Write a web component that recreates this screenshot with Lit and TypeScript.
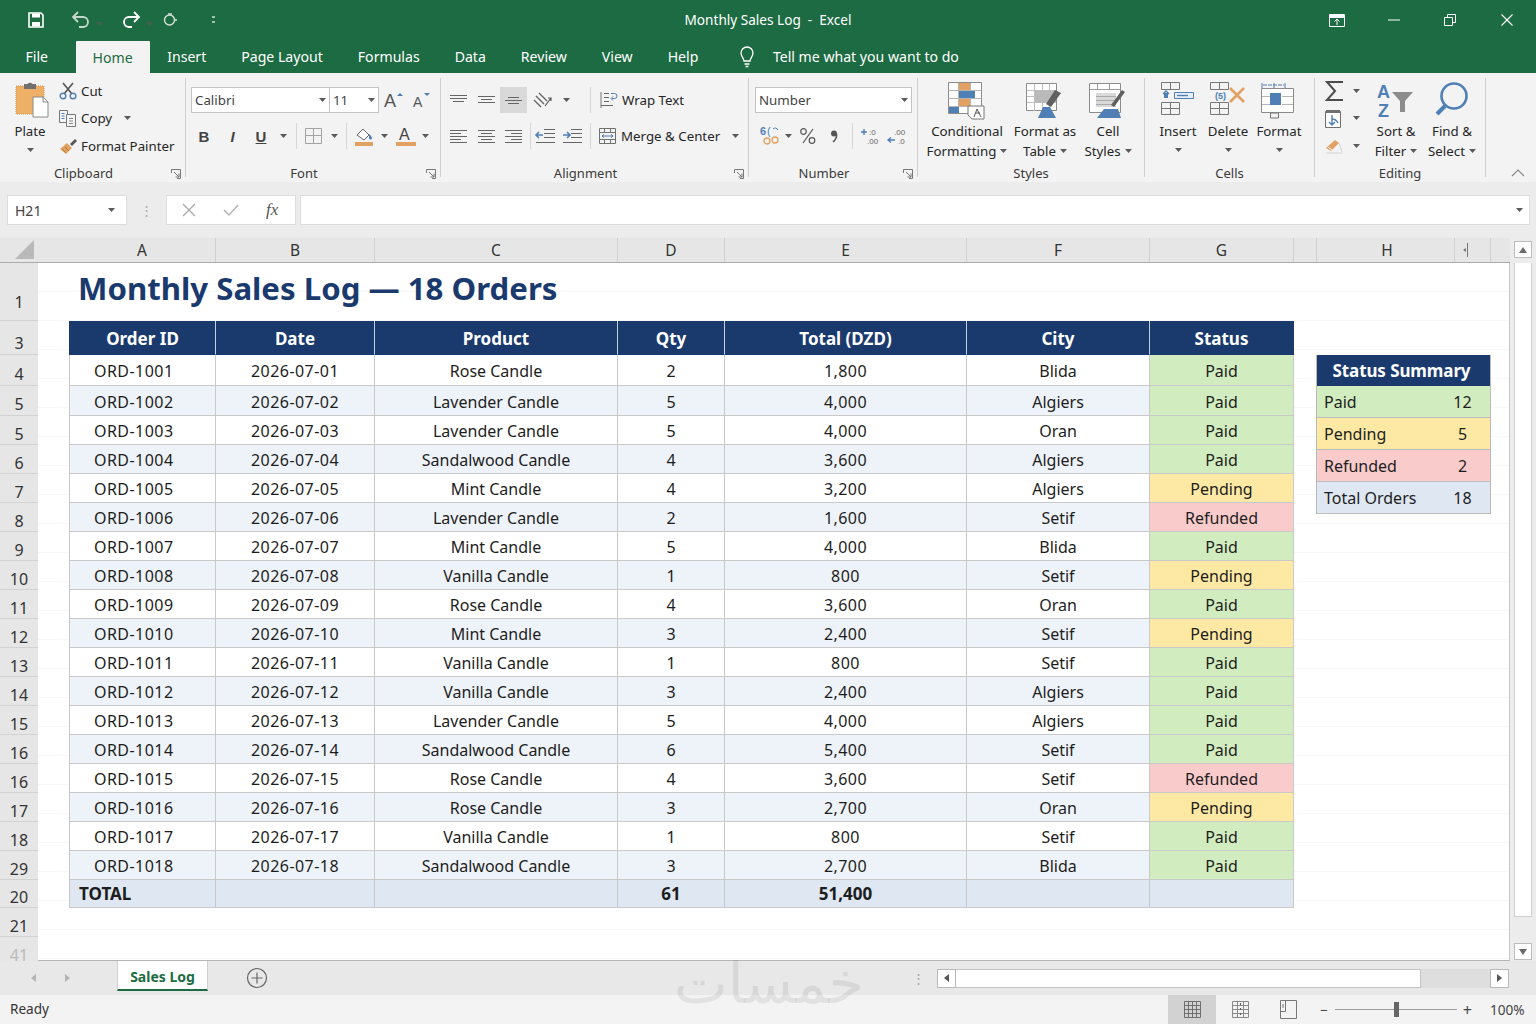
import { LitElement, html, css, svg } from "lit";
import { customElement } from "lit/decorators.js";

const ORDERS = [
  ["ORD-1001", "2026-07-01", "Rose Candle", "2", "1,800", "Blida", "Paid"],
  ["ORD-1002", "2026-07-02", "Lavender Candle", "5", "4,000", "Algiers", "Paid"],
  ["ORD-1003", "2026-07-03", "Lavender Candle", "5", "4,000", "Oran", "Paid"],
  ["ORD-1004", "2026-07-04", "Sandalwood Candle", "4", "3,600", "Algiers", "Paid"],
  ["ORD-1005", "2026-07-05", "Mint Candle", "4", "3,200", "Algiers", "Pending"],
  ["ORD-1006", "2026-07-06", "Lavender Candle", "2", "1,600", "Setif", "Refunded"],
  ["ORD-1007", "2026-07-07", "Mint Candle", "5", "4,000", "Blida", "Paid"],
  ["ORD-1008", "2026-07-08", "Vanilla Candle", "1", "800", "Setif", "Pending"],
  ["ORD-1009", "2026-07-09", "Rose Candle", "4", "3,600", "Oran", "Paid"],
  ["ORD-1010", "2026-07-10", "Mint Candle", "3", "2,400", "Setif", "Pending"],
  ["ORD-1011", "2026-07-11", "Vanilla Candle", "1", "800", "Setif", "Paid"],
  ["ORD-1012", "2026-07-12", "Vanilla Candle", "3", "2,400", "Algiers", "Paid"],
  ["ORD-1013", "2026-07-13", "Lavender Candle", "5", "4,000", "Algiers", "Paid"],
  ["ORD-1014", "2026-07-14", "Sandalwood Candle", "6", "5,400", "Setif", "Paid"],
  ["ORD-1015", "2026-07-15", "Rose Candle", "4", "3,600", "Setif", "Refunded"],
  ["ORD-1016", "2026-07-16", "Rose Candle", "3", "2,700", "Oran", "Pending"],
  ["ORD-1017", "2026-07-17", "Vanilla Candle", "1", "800", "Setif", "Paid"],
  ["ORD-1018", "2026-07-18", "Sandalwood Candle", "3", "2,700", "Blida", "Paid"],
];
const HEADERS = ["Order ID", "Date", "Product", "Qty", "Total (DZD)", "City", "Status"];
const ROW_LABELS = ["3", "4", "5", "5", "6", "7", "8", "9", "10", "11", "12", "13", "14", "15", "16", "16", "17", "18", "29", "20", "21"];
const SUMMARY = [
  ["Paid", "12", "paid"],
  ["Pending", "5", "pending"],
  ["Refunded", "2", "refunded"],
  ["Total Orders", "18", "sum-total"],
];
const TABS = ["Insert", "Page Layout", "Formulas", "Data", "Review", "View", "Help"];

const BL = "#4f7fb5";
const OR = "#e3a063";

const ic = (w: number, h: number, body: unknown) =>
  html`<svg width=${w} height=${h} viewBox="0 0 ${w} ${h}" fill="none">${body}</svg>`;

const caret = () => html`<svg class="caret" width="7" height="4" viewBox="0 0 7 4"><path d="M0 0h7L3.5 4z" fill="#5a5a5a"/></svg>`;
const launcher = () => html`<svg class="launcher" width="10" height="10" viewBox="0 0 10 10" fill="none" stroke="#777">
  <path d="M.5 4V.5H9.5V9.5H6"/><path d="M3 3l5 5M8 4.5V8H4.5"/></svg>`;

const lines = (rows: number[][], color = "#666") =>
  rows.map(([x1, x2, y]) => svg`<path d="M${x1} ${y}.5H${x2}" stroke=${color}/>`);

// ribbon icons, drawn at the size they have on screen
const icons = {
  save: ic(18, 18, svg`<path d="M2 2h12l2 2v12H2z" stroke="#fff" stroke-width="1.6"/><path d="M5 2.5h8v4H5z" fill="#fff"/><path d="M5 11h8v4.5H5z" fill="#fff"/>`),
  undo: ic(20, 18, svg`<path d="M2 6h10a5 5 0 0 1 0 10H8" stroke="#c6d8cd" stroke-width="1.8"/><path d="M7 1L2 6l5 5" stroke="#c6d8cd" stroke-width="1.8"/>`),
  redo: ic(20, 18, svg`<path d="M18 6H8a5 5 0 0 0 0 10h3" stroke="#fff" stroke-width="1.8"/><path d="M13 1l5 5-5 5" stroke="#fff" stroke-width="1.8"/>`),
  touch: ic(16, 16, svg`<circle cx="7.5" cy="8" r="5" stroke="#d5e2da" stroke-width="1.4"/><path d="M6 2h4M12 8h3" stroke="#d5e2da" stroke-width="1.4"/>`),
  qat: ic(4, 8, svg`<path d="M0 1h3M0 6h3" stroke="#cfe0d6" stroke-width="1.4"/>`),
  bulb: ic(16, 22, svg`<path d="M5 15c0-3-3-4-3-8a6 6 0 0 1 12 0c0 4-3 5-3 8z" stroke="#fff" stroke-width="1.3"/><path d="M5.5 18h5M6.5 20.5h3" stroke="#fff" stroke-width="1.3"/>`),
  display: ic(16, 13, svg`<path d="M.5.5h15v12H.5z" stroke="#fff"/><path d="M1 1h14v3H1z" fill="#fff"/><path d="M8 11V6M5.5 7.5L8 5l2.5 2.5" stroke="#fff"/>`),
  min: ic(12, 2, svg`<path d="M0 1h12" stroke="#fff"/>`),
  restore: ic(12, 12, svg`<path d="M.5 3.5h8v8h-8z" stroke="#fff"/><path d="M3.5 3V.5h8v8H9" stroke="#fff"/>`),
  close: ic(12, 12, svg`<path d="M.5.5l11 11M11.5.5l-11 11" stroke="#fff" stroke-width="1.1"/>`),
  paste: ic(40, 36, svg`<path d="M6 4h28v28H6z" fill="#eeaf66"/><path d="M6 4h28v28H6z" stroke="#d9954a" stroke-dasharray="1 1"/><path d="M14 2h3.5a3 3 0 0 1 5 0H26v5H14z" fill="#707070"/><path d="M23 15h10l5 5v15H23z" fill="#fff" stroke="#8a8a8a"/><path d="M33 15v5h5" stroke="#8a8a8a"/>`),
  cut: ic(18, 18, svg`<path d="M4 1l9 11M14 1L5 12" stroke="#555" stroke-width="1.6"/><circle cx="4" cy="14" r="2.8" stroke=${BL} stroke-width="1.4"/><circle cx="14" cy="14" r="2.8" stroke=${BL} stroke-width="1.4"/>`),
  copy: ic(18, 18, svg`<path d="M.5 1.5h8v12h-8z" stroke="#777"/><path d="M7.5 5.5h9v12h-9z" fill="#f5f5f5" stroke="#777"/><path d="M2.5 4.5h3M2.5 7h3M2.5 9.5h3" stroke=${BL}/><path d="M10 9.5h4M10 12h4M10 14.5h4" stroke="#888"/>`),
  painter: ic(20, 18, svg`<path d="M1 12l7-6 5 5-6 6z" fill=${OR}/><path d="M3 12l4 4M6 10l4 4" stroke="#b37a3f"/><path d="M11 7l5-5 2 2-5 5z" fill="#555"/>`),
  growA: ic(20, 18, svg`<text x="0" y="16" font-size="18" fill="#555" font-family="Liberation Sans">A</text><path d="M13 5l3-3 3 3z" fill=${BL}/>`),
  shrinkA: ic(20, 18, svg`<text x="1" y="16" font-size="14" fill="#555" font-family="Liberation Sans">A</text><path d="M12 2h6l-3 3z" fill=${BL}/>`),
  borders: ic(18, 16, svg`<path d="M.5.5h16v15H.5zM8.5 1v14M1 7.5h15" stroke="#a3a3a3"/>`),
  fill: ic(20, 20, svg`<path d="M3 9l6-6 6 6-5 5z" fill="#fff" stroke="#666"/><path d="M15 8c2 2 3 3 3 4a1.5 1.5 0 0 1-3 0z" fill=${BL}/><path d="M1 16h18v4H1z" fill=${OR}/>`),
  fontColor: ic(20, 20, svg`<text x="3" y="14" font-size="16" fill="#444" font-family="Liberation Sans">A</text><path d="M0 16h20v4H0z" fill=${OR}/>`),
  aTop: ic(18, 10, svg`${lines([[0, 17, 0], [0, 17, 3], [3, 14, 6]])}`),
  aMid: ic(18, 10, svg`${lines([[0, 17, 1], [3, 14, 4], [0, 17, 7]])}`),
  aBot: ic(18, 10, svg`${lines([[3, 14, 2], [0, 17, 5], [3, 14, 8]])}`),
  aLeft: ic(18, 14, svg`${lines([[0, 17, 1], [0, 11, 4], [0, 17, 7], [0, 11, 10], [0, 17, 13]])}`),
  aCenter: ic(18, 14, svg`${lines([[0, 17, 1], [3, 14, 4], [0, 17, 7], [3, 14, 10], [0, 17, 13]])}`),
  aRight: ic(18, 14, svg`${lines([[0, 17, 1], [6, 17, 4], [0, 17, 7], [6, 17, 10], [0, 17, 13]])}`),
  orient: ic(20, 18, svg`<path d="M3 5l8 8M1 9l7 7M6 2l8 8" stroke="#666" stroke-width="1.4"/><path d="M12 15L18 7M15 7h3v3" stroke="#555" stroke-width="1.2"/>`),
  indentL: ic(20, 14, svg`${lines([[8, 19, 0], [8, 19, 4], [8, 19, 8], [0, 19, 13]])}<path d="M0 6h7M3 3L0 6l3 3" stroke=${BL} stroke-width="1.6"/>`),
  indentR: ic(20, 14, svg`${lines([[8, 19, 0], [8, 19, 4], [8, 19, 8], [0, 19, 13]])}<path d="M0 6h7M4 3l3 3-3 3" stroke=${BL} stroke-width="1.6"/>`),
  wrap: ic(18, 18, svg`<path d="M1 1v16" stroke="#777"/><path d="M4 2.5h5M4 6.5h5M4 10.5h5M1 14.5h12" stroke="#666"/><path d="M11 2.5h3.5a2 2 0 0 1 0 5H12M13 5.5l-2 2 2 2" stroke=${BL}/>`),
  merge: ic(18, 18, svg`<path d="M.5 1.5h16v15H.5zM1 5.5h15M1 12.5h15M5.5 1v4M11.5 1v4M5.5 13v3M11.5 13v3" stroke="#707070"/><path d="M3 9h11M5 7.5L3 9l2 1.5M12 7.5L14 9l-2 1.5" stroke=${BL}/>`),
  accounting: ic(20, 20, svg`<text x="0" y="9" font-size="11" fill=${BL} font-family="Liberation Sans" font-weight="700">6</text><text x="7" y="9" font-size="11" fill=${BL} font-family="Liberation Sans">(</text><path d="M13 3a3 3 0 0 1 5 1" stroke=${BL}/><circle cx="7" cy="15" r="3" stroke=${OR} stroke-width="1.3"/><circle cx="15" cy="14" r="3" stroke=${OR} stroke-width="1.3"/>`),
  percent: ic(18, 18, svg`<circle cx="4.5" cy="4.5" r="2.8" stroke="#555" stroke-width="1.2"/><circle cx="13" cy="13.5" r="2.8" stroke="#555" stroke-width="1.2"/><path d="M14 2L4 16" stroke="#555" stroke-width="1.2"/>`),
  comma: ic(10, 14, svg`<circle cx="5" cy="4.5" r="3" fill="#555"/><path d="M7.5 5c.5 3-1 6-3.5 8" stroke="#555" stroke-width="1.6"/>`),
  incDec: ic(20, 16, svg`<path d="M1 4h6M4 1v6" stroke=${BL} stroke-width="1.4"/><text x="9" y="7" font-size="8" fill="#666" font-family="Liberation Sans">:0</text><text x="7" y="15.5" font-size="8" fill="#666" font-family="Liberation Sans">.00</text>`),
  decDec: ic(20, 16, svg`<text x="7" y="7" font-size="8" fill="#666" font-family="Liberation Sans">.00</text><path d="M1 12h7M5 9.5L8 12l-3 2.5" stroke=${BL} stroke-width="1.3" transform="matrix(-1 0 0 1 9 0)"/><text x="11" y="15.5" font-size="8" fill="#666" font-family="Liberation Sans">.0</text>`),
  conditional: ic(38, 38, svg`<path d="M.5.5h33v31H.5z" fill="#fff" stroke="#8b8b8b"/><path d="M.5 8.5h33M.5 16.5h33M.5 24.5h33M10.5 1v30M22.5 1v30" stroke="#b5b5b5"/><path d="M11 1h11v7H11zM11 17h11v7H11z" fill=${OR}/><path d="M11 9h16v7H11zM1 25h10v6H1z" fill=${BL}/><path d="M20 24h16v13H24l-4-4z" fill="#fff" stroke="#777"/><path d="M26 35l3-8 4 8M28 31h4" stroke="#555"/>`),
  asTable: ic(38, 38, svg`<path d="M.5 1.5h30v27H.5z" fill="#fff" stroke="#8b8b8b"/><path d="M1 8.5h29M1 14.5h29M1 20.5h29M8.5 2v27M16.5 2v27M23.5 2v27" stroke="#bdbdbd"/><path d="M9 9h21v12H9z" fill="#b9b9b9"/><path d="M29 8l6 3-10 14-5-3z" fill="#606060"/><path d="M12 36l5-11h7l6 11z" fill=${BL}/>`),
  cellStyles: ic(38, 38, svg`<path d="M.5 1.5h31v29H.5z" fill="#fff" stroke="#8b8b8b"/><path d="M1 7.5h30M8.5 2v6M20.5 2v6" stroke="#9c9c9c"/><path d="M7 11h20v14H7z" fill="#d9d9d9"/><path d="M7 14.5h20M7 18.5h20M7 22.5h20" stroke="#a9a9a9"/><path d="M33 8l3 2-11 15-3-2z" fill="#606060"/><path d="M8 36l7-9h14l3 9z" fill=${BL}/>`),
  insert: ic(34, 34, svg`<path d="M.5.5h18v7H.5zM9.5 1v6M.5 20.5h18v12H.5zM1 26.5h17M9.5 21v12" stroke="#777"/><path d="M3 11h4v5H3z" fill=${BL}/><path d="M2 12l3-3 3 3" stroke=${BL} stroke-width="1.4"/><path d="M13.5 10.5h19v6h-19z" fill="#e9eef5" stroke=${BL}/><path d="M16 13.5h11" stroke=${BL} stroke-width="1.4"/>`),
  del: ic(36, 34, svg`<path d="M.5.5h18v7H.5zM9.5 1v6M.5 20.5h18v12H.5zM1 26.5h17M9.5 21v12" stroke="#777"/><text x="5" y="17" font-size="9" fill=${BL} font-family="Liberation Sans" font-weight="700">(5)</text><path d="M20 6l14 14M34 6L20 20" stroke=${OR} stroke-width="2.6"/>`),
  format: ic(36, 38, svg`<path d="M.5 6.5h32v24H.5z" fill="#fff" stroke="#8b8b8b"/><path d="M1 1v5M13 1v5M24 1v5" stroke=${BL}/><path d="M2 3h21" stroke=${BL} stroke-dasharray="4 1"/><path d="M9 11h11v12H9z" fill=${BL}/><path d="M1 14.5h8M21 14.5h11M1 22.5h8M21 22.5h11" stroke="#b5b5b5"/><path d="M9.5 31h8v5h-8z" stroke="#777"/>`),
  sum: ic(20, 20, svg`<path d="M18 1H2l8 9-8 9h16" stroke="#4c4c4c" stroke-width="2"/>`),
  fillDown: ic(18, 19, svg`<path d="M.5 2.5h15v16H.5z" fill="#fff" stroke="#707070"/><path d="M1 1h14v3H1z" fill="#707070"/><path d="M7 6v9M4 13l3 3 3-3M7 10c3 0 5 2 6 4" stroke=${BL} stroke-width="1.4"/>`),
  clear: ic(18, 16, svg`<path d="M1 10l9-8 4 3-8 8z" fill=${OR}/><path d="M3 9l4 3" stroke="#fff"/><path d="M1 15h16M14 5l3 9" stroke="#d3d3d3"/>`),
  sort: ic(38, 36, svg`<text x="0" y="16" font-size="18" font-weight="700" fill=${BL} font-family="Liberation Sans">A</text><text x="1" y="35" font-size="18" font-weight="700" fill=${BL} font-family="Liberation Sans">Z</text><path d="M15 10h21l-8 9v11h-5V19z" fill="#8c8c8c"/>`),
  find: ic(36, 36, svg`<circle cx="20" cy="14" r="12.5" stroke=${BL} stroke-width="2.6"/><path d="M11 24L3 32" stroke=${BL} stroke-width="4"/>`),
  chevron: ic(14, 8, svg`<path d="M1 7l6-6 6 6" stroke="#8a8a8a" stroke-width="1.2"/>`),
  x: ic(14, 14, svg`<path d="M1 1l12 12M13 1L1 13" stroke="#a8a8a8" stroke-width="1.3"/>`),
  check: ic(16, 12, svg`<path d="M1 6l5 5 9-10" stroke="#b4b4b4" stroke-width="1.5"/>`),
  corner: ic(20, 20, svg`<path d="M19 0v19H0z" fill="#b9b9b9"/>`),
  splitter: ic(13, 14, svg`<path d="M12.5 0v14" stroke="#777"/><path d="M8 5L11 7l-3 2z" fill="#777" transform="matrix(-1 0 0 1 19 0)"/>`),
  plus: ic(22, 22, svg`<circle cx="11" cy="11" r="9.5" stroke="#666" stroke-width="1.2"/><path d="M11 5.5v11M5.5 11h11" stroke="#666" stroke-width="1.2"/>`),
  viewNormal: ic(17, 17, svg`<path d="M.5.5h16v16H.5zM1 4.5h15M1 8.5h15M1 12.5h15M4.5 1v15M8.5 1v15M12.5 1v15" stroke="#6f6f6f"/>`),
  viewLayout: ic(17, 17, svg`<path d="M.5.5h16v16H.5zM1 4.5h15M1 8.5h15M1 12.5h15M5.5 1v15M11.5 1v15" stroke="#8a8a8a"/><path d="M8 2h1v2H8zM8 7h1v2H8zM8 12h1v2H8z" fill="#555"/>`),
  viewBreak: ic(17, 19, svg`<path d="M.5.5h16v18H.5zM.5 11.5h5V1" stroke="#777"/><path d="M2.5 4h1v4h-1z" fill="#777"/>`),
};

@customElement("app-root")
export class AppRoot extends LitElement {
  static styles = css`
    :host { display: block; width: 1536px; height: 1024px; overflow: hidden; position: relative; background: #f3f3f3; color: #262626; font-family: "Noto Sans", "Open Sans", sans-serif; font-size: 13.3px; }
    svg { display: block; flex: none; overflow: visible; }
    .caret { display: inline-block; }

    .titlebar { height: 40px; background: #1c6b42; color: #fff; display: grid; grid-template-columns: 1fr auto 1fr; align-items: center; font-size: 13.6px; }
    .doc { margin-top: -2px; }
    .qat { display: flex; align-items: center; padding-left: 27px; }
    .qat .dim { margin-left: 5px; opacity: .7; }
    .qat .undo { margin-left: 26px; }
    .qat .redo { margin-left: 18px; }
    .qat .touch { margin-left: 9px; }
    .qat .more { margin-left: 34px; }
    .winctl { display: grid; grid-template-columns: repeat(4, 56.5px); justify-content: end; justify-items: center; align-items: center; padding-right: 1px; }

    .tabs { height: 33px; background: #1c6b42; color: #fff; display: flex; align-items: stretch; font-size: 14.1px; padding-left: 8px; }
    .tab { display: flex; align-items: center; padding: 0 17.5px; }
    .tab.file { margin-right: 10px; }
    .tab.home { background: #f3f3f3; color: #1c6b42; padding: 0 17px; border-radius: 1px 1px 0 0; margin-top: 1px; }
    .tell { display: flex; align-items: center; gap: 18px; margin-left: 23px; }

    .ribbon { height: 109px; display: flex; background: #f3f3f3; }
    .group { display: flex; flex-direction: column; flex: none; }
    .g-clip { width: 185px; } .g-font { width: 254px; } .g-align { width: 307px; } .g-num { width: 168px; }
    .g-styles { width: 226px; } .g-cells { width: 169px; } .g-edit { width: 170px; }
    .vsep { width: 1px; margin: 5px 0; background: #cfcfcf; flex: none; }
    .collapse { flex: 1; display: flex; align-items: flex-end; justify-content: flex-end; padding: 0 11px 5px 0; }
    .body { height: 91px; display: flex; }
    .foot { height: 18px; line-height: 18px; text-align: center; position: relative; font-size: 13px; color: #3a3a3a; }
    .foot.launch { padding-right: 18px; }
    .launcher { position: absolute; right: 4px; top: 5px; }
    .big { display: flex; flex-direction: column; align-items: center; padding-top: 9px; white-space: nowrap; flex: none; line-height: 20px; }
    .big .pic { height: 39px; flex: none; display: flex; align-items: flex-start; justify-content: center; }
    .big .caret { margin: 0 0 2px 4px; vertical-align: middle; }
    .big .solo { display: flex; justify-content: center; height: 4px; margin-top: 7px; }
    .big .solo .caret { margin: 0; }
    .w60 { width: 60px; } .w98 { width: 98px; } .w58 { width: 58px; } .w68 { width: 68px; } .w66 { width: 66px; } .w34 { width: 34px; } .w44 { width: 44px; }

    .small { display: grid; grid-template-rows: 27px 28px 27px; padding-top: 4px; margin-left: -1px; }
    .small .line { display: flex; align-items: center; white-space: nowrap; }
    .small .slot { width: 22px; }
    .small .caret { margin-left: 12px; }
    .small.edit { margin: 0 2px 0 10px; }
    .small.edit .caret { margin-left: 6px; }

    .stack { padding-top: 14px; }
    .row { display: grid; height: 26px; align-items: center; justify-items: center; }
    .row.below { margin-top: 10px; }
    .combo { display: flex; align-items: center; justify-content: space-between; height: 26px; box-sizing: border-box; background: #fff; border: 1px solid #c4c4c4; padding: 0 3px; font-size: 13.3px; color: #444; }
    .combos { display: flex; align-items: center; margin-left: 5px; }
    .c-font { width: 139px; } .c-size { width: 50px; margin-left: -1px; }
    .combos .a1 { margin-left: 5px; } .combos .a2 { margin-left: 8px; }
    .r-font { grid-template-columns: 28px 29px 28px 16px 10px 26px 14px 10px 26px 14px 29px 11px; margin-left: 4px; }
    .fb { font-family: "Liberation Sans", sans-serif; font-weight: 700; font-size: 15px; color: #444; line-height: 1; }
    .fb.i { font-style: italic; }
    .fb.u { text-decoration: underline; }
    .tsep { width: 1px; height: 26px; background: #d6d6d6; }
    .r-a1 { grid-template-columns: 28px 27px 27px 32px 14px 17px 1px 9px auto; margin-left: 4px; }
    .r-a2 { grid-template-columns: 28px 27px 27px 6px 26px 27px 4px 1px 8px auto; margin-left: 4px; }
    .active { background: #d9d9d9; width: 100%; height: 100%; display: flex; align-items: center; justify-content: center; }
    .with-icon { display: flex; align-items: center; gap: 4px; white-space: nowrap; justify-self: start; }
    .with-icon .caret { margin-left: 8px; }
    .c-num { width: 157px; margin-left: 6px; }
    .r-num { grid-template-columns: 20px 16px 24px 27px 10px 26px 28px; margin-left: 11px; }

    .formula { height: 56px; box-sizing: border-box; padding: 13px 6px 13px 7px; display: flex; align-items: stretch; background: #ececec; }
    .box { background: #fff; border: 1px solid #dcdcdc; box-sizing: border-box; display: flex; align-items: center; }
    .name { width: 120px; padding: 0 11px 0 7px; justify-content: space-between; font-size: 14px; color: #444; }
    .dots { width: 39px; color: #aaa; display: flex; align-items: center; justify-content: center; }
    .fxbox { width: 130px; padding-left: 15px; gap: 27px; }
    .fx { font-family: "Liberation Serif", serif; font-style: italic; font-size: 17px; color: #555; }
    .fbar { flex: 1; margin-left: 4px; justify-content: flex-end; padding-right: 6px; }

    .colhead { height: 25px; display: grid; grid-template-columns: 38px 31px 147px 159px 243px 107px 242px 183px 144px 23px 138px 13px 23px 19px 26px; background: #e6e6e6; font-size: 15.5px; color: #333; box-sizing: border-box; border-bottom: 1px solid #ababab; }
    .colhead > div { display: flex; align-items: center; justify-content: center; border-right: 1px solid #cfcfcf; box-sizing: border-box; }
    .colhead .corner { border: none; justify-content: flex-end; padding-right: 3px; }
    .colhead .plain, .colhead .split { border: none; }
    .colhead .colh { padding-left: 3px; }
    .colhead .scr { border: none; background: #ececec; margin-bottom: -1px; align-items: flex-start; }
    .up { width: 18px; height: 17px; margin-top: 3px; background: #fff; border: 1px solid #bcbcbc; box-sizing: border-box; display: flex; align-items: center; justify-content: center; }
    .tri-up { width: 0; height: 0; border: 4px solid transparent; border-bottom: 6px solid #6b6b6b; border-top: 0; }
    .tri-down { width: 0; height: 0; border: 4px solid transparent; border-top: 6px solid #6b6b6b; border-bottom: 0; }
    .tri-left { width: 0; height: 0; border: 4px solid transparent; border-right: 5px solid #555; border-left: 0; }
    .tri-right { width: 0; height: 0; border: 4px solid transparent; border-left: 5px solid #555; border-right: 0; }

    .main { height: 698px; display: flex; }
    .rowhead { width: 38px; flex: none; display: grid; grid-template-rows: 58px 34px 31px 30px repeat(16, 29px) 28px 29px 24px; background: #e6e6e6; overflow: hidden; font-size: 16px; color: #333; }
    .rowhead > div { display: flex; justify-content: center; align-items: center; padding-top: 7px; box-sizing: border-box; border-bottom: 1px solid #d2d2d2; }
    .rowhead .first { padding-top: 20px; }
    .rowhead > div:nth-child(2) { padding-top: 11px; }
    .rowhead .faint { color: #bbb; padding-top: 12px; border: none; }
    .sheet { flex: 1; background: #fff repeating-linear-gradient(to bottom, transparent 0 28px, #f7f7f7 28px 29px); position: relative; border-bottom: 1px solid #b5b5b5; border-right: 1px solid #c8c8c8; box-sizing: border-box; overflow: hidden; font-size: 16px; color: #1d1d1d; }
    .title { height: 58px; padding-left: 40px; box-sizing: border-box; font-size: 31.2px; font-weight: 700; color: #1a3a6e; line-height: 50px; white-space: nowrap; }
    .content { display: flex; align-items: flex-start; padding-left: 31px; }
    .table { display: grid; grid-template-columns: 147px 159px 243px 107px 242px 183px 144px; grid-template-rows: 34px 31px 30px repeat(16, 29px) 28px; flex: none; }
    .cell { display: flex; align-items: center; justify-content: center; border-right: 1px solid #c9c9c9; border-bottom: 1px solid #c9c9c9; box-sizing: border-box; white-space: nowrap; background: #fff; padding-top: 2px; }
    .cell:nth-child(7n + 1) { border-left: 1px solid #c9c9c9; }
    .cell.id { justify-content: flex-start; padding-left: 24px; }
    .cell.num { letter-spacing: .45px; }
    .cell.alt { background: #eef3f9; }
    .cell.head { background: #1a3a6e; color: #fff; font-weight: 700; font-size: 17px; border-color: #1a3a6e; border-right-color: #c5cfdf; }
    .cell.head.last { border-right-color: #1a3a6e; }
    .paid { background: #d1ecbe !important; } .pending { background: #fde9a4 !important; } .refunded { background: #f9cbcb !important; } .sum-total { background: #dfe7f3; }
    .cell.total { background: #dfe7f3; font-weight: 700; font-size: 17px; padding-top: 0; }
    .cell.total.id { padding-left: 9px; }
    .summary { margin: 34px 0 0 22px; width: 173px; flex: none; display: grid; grid-template-columns: 130px 43px; grid-template-rows: 31px repeat(4, 32px); border-right: 1px solid #b9b9b9; border-left: 1px solid #b9b9b9; }
    .summary .stitle { grid-column: 1 / 3; background: #1a3a6e; color: #fff; font-weight: 700; font-size: 17px; letter-spacing: -.1px; display: flex; align-items: center; justify-content: center; padding-right: 4px; }
    .summary .lab, .summary .val { display: flex; align-items: center; border-bottom: 1px solid #bcbcbc; box-sizing: border-box; }
    .summary .lab { padding-left: 7px; }
    .summary .val { justify-content: center; padding-right: 12px; }

    .vscroll { width: 26px; flex: none; background: #ececec; display: flex; flex-direction: column; align-items: center; }
    .vthumb { width: 18px; height: 654px; background: #fff; border: 1px solid #cfcfcf; box-sizing: border-box; border-top: none; }
    .down { margin-top: 26px; }

    .sheetbar { height: 34px; background: #e8e8e8; display: flex; align-items: center; position: relative; box-sizing: border-box; }
    .nav { display: flex; gap: 29px; margin-left: 31px; width: 86px; opacity: .35; }
    .stab { width: 91px; height: 30px; align-self: flex-start; padding-top: 3px; background: #fff; color: #1c6b42; font-weight: 700; font-size: 14px; display: flex; align-items: center; justify-content: center; border-bottom: 2px solid #1c6b42; border-left: 1px solid #cfcfcf; border-right: 1px solid #cfcfcf; box-sizing: border-box; }
    .addsheet { margin-left: 38px; }
    .hdots { margin-left: 644px; width: 18px; color: #a5a5a5; }
    .hscroll { display: flex; align-items: stretch; height: 19px; margin-left: 7px; }
    .sbtn { width: 19px; background: #fff; border: 1px solid #b9b9b9; box-sizing: border-box; display: flex; align-items: center; justify-content: center; }
    .hthumb { width: 465px; background: #fff; border: 1px solid #c4c4c4; border-left: none; box-sizing: border-box; }
    .htrack { width: 69px; background: #dedede; }

    .status { height: 29px; background: #f3f3f3; display: flex; align-items: center; font-size: 13.6px; padding-left: 10px; color: #333; }
    .ready { margin-top: -2px; }
    .views { margin-left: auto; display: flex; height: 100%; align-items: center; }
    .view { width: 48px; height: 100%; display: flex; align-items: center; justify-content: center; }
    .view.on { background: #d2d2d2; }
    .zoom { display: flex; align-items: center; margin-left: 8px; width: 216px; color: #444; }
    .slider { width: 122px; height: 1px; background: #9c9c9c; margin: 0 6px 0 7px; position: relative; }
    .knob { position: absolute; left: 59px; top: -7px; width: 5px; height: 15px; background: #666; }
    .zplus { font-size: 16px; line-height: 1; }
    .pct { margin-left: 18px; }

    .watermark { position: absolute; left: 674px; top: 945px; font-family: "DejaVu Sans", sans-serif; font-size: 57px; line-height: 76px; color: rgba(0, 0, 0, .07); pointer-events: none; }
  `;

  render() {
    return html`
      ${this.renderTitle()}
      ${this.renderRibbon()}
      ${this.renderFormula()}
      ${this.renderSheet()}
      ${this.renderBottom()}
      <div class="watermark">خمسات</div>
    `;
  }

  renderTitle() {
    return html`
      <div class="titlebar">
        <div class="qat">
          ${icons.save}
          <span class="undo">${icons.undo}</span><span class="dim">${caret()}</span>
          <span class="redo">${icons.redo}</span><span class="dim">${caret()}</span>
          <span class="touch">${icons.touch}</span>
          <span class="more">${icons.qat}</span>
        </div>
        <div class="doc">Monthly Sales Log&nbsp; -&nbsp; Excel</div>
        <div class="winctl">${icons.display}${icons.min}${icons.restore}${icons.close}</div>
      </div>
      <div class="tabs">
        <div class="tab file">File</div>
        <div class="tab home">Home</div>
        ${TABS.map((t) => html`<div class="tab">${t}</div>`)}
        <div class="tell">${icons.bulb}<span>Tell me what you want to do</span></div>
      </div>
    `;
  }

  bigBtn(width: string, icon: unknown, l1: string, l2?: string) {
    return html`
      <div class="big ${width}">
        <div class="pic">${icon}</div>
        <div>${l1}</div>
        ${l2 ? html`<div>${l2}${caret()}</div>` : html`<div class="solo">${caret()}</div>`}
      </div>
    `;
  }

  renderRibbon() {
    return html`
      <div class="ribbon">
        <div class="group g-clip">
          <div class="body">
            ${this.bigBtn("w60", icons.paste, "Plate")}
            <div class="small">
              <div class="line"><span class="slot">${icons.cut}</span>Cut</div>
              <div class="line"><span class="slot">${icons.copy}</span>Copy${caret()}</div>
              <div class="line"><span class="slot">${icons.painter}</span>Format Painter</div>
            </div>
          </div>
          <div class="foot launch">Clipboard${launcher()}</div>
        </div>
        <i class="vsep"></i>
        <div class="group g-font">
          <div class="body stack">
            <div>
              <div class="combos">
                <div class="combo c-font">Calibri${caret()}</div>
                <div class="combo c-size">11${caret()}</div>
                <span class="a1">${icons.growA}</span><span class="a2">${icons.shrinkA}</span>
              </div>
              <div class="row below r-font">
                <span class="fb">B</span><span class="fb i">I</span><span class="fb u">U</span>${caret()}
                <i class="tsep"></i>${icons.borders}${caret()}
                <i class="tsep"></i>${icons.fill}${caret()}
                ${icons.fontColor}${caret()}
              </div>
            </div>
          </div>
          <div class="foot launch">Font${launcher()}</div>
        </div>
        <i class="vsep"></i>
        <div class="group g-align">
          <div class="body stack">
            <div>
              <div class="row r-a1">
                ${icons.aTop}${icons.aMid}<div class="active">${icons.aBot}</div>
                ${icons.orient}${caret()}<span></span><i class="tsep"></i><span></span>
                <div class="with-icon">${icons.wrap}Wrap Text</div>
              </div>
              <div class="row below r-a2">
                ${icons.aLeft}${icons.aCenter}${icons.aRight}<i class="tsep"></i>
                ${icons.indentL}${icons.indentR}<span></span><i class="tsep"></i><span></span>
                <div class="with-icon">${icons.merge}Merge &amp; Center${caret()}</div>
              </div>
            </div>
          </div>
          <div class="foot launch">Alignment${launcher()}</div>
        </div>
        <i class="vsep"></i>
        <div class="group g-num">
          <div class="body stack">
            <div>
              <div class="combo c-num">Number${caret()}</div>
              <div class="row below r-num">
                ${icons.accounting}${caret()}${icons.percent}${icons.comma}<i class="tsep"></i>${icons.incDec}${icons.decDec}
              </div>
            </div>
          </div>
          <div class="foot launch">Number${launcher()}</div>
        </div>
        <i class="vsep"></i>
        <div class="group g-styles">
          <div class="body">
            ${this.bigBtn("w98", icons.conditional, "Conditional", "Formatting")}
            ${this.bigBtn("w58", icons.asTable, "Format as", "Table")}
            ${this.bigBtn("w68", icons.cellStyles, "Cell", "Styles")}
          </div>
          <div class="foot">Styles</div>
        </div>
        <i class="vsep"></i>
        <div class="group g-cells">
          <div class="body">
            ${this.bigBtn("w66", icons.insert, "Insert")}
            ${this.bigBtn("w34", icons.del, "Delete")}
            ${this.bigBtn("w68", icons.format, "Format")}
          </div>
          <div class="foot">Cells</div>
        </div>
        <i class="vsep"></i>
        <div class="group g-edit">
          <div class="body">
            <div class="small edit">
              <div class="line"><span class="slot">${icons.sum}</span>${caret()}</div>
              <div class="line"><span class="slot">${icons.fillDown}</span>${caret()}</div>
              <div class="line"><span class="slot">${icons.clear}</span>${caret()}</div>
            </div>
            ${this.bigBtn("w68", icons.sort, "Sort &", "Filter")}
            ${this.bigBtn("w44", icons.find, "Find &", "Select")}
          </div>
          <div class="foot">Editing</div>
        </div>
        <i class="vsep"></i>
        <div class="collapse">${icons.chevron}</div>
      </div>
    `;
  }

  renderFormula() {
    return html`
      <div class="formula">
        <div class="box name">H21${caret()}</div>
        <div class="dots">⋮</div>
        <div class="box fxbox">${icons.x}${icons.check}<span class="fx">fx</span></div>
        <div class="box fbar">${caret()}</div>
      </div>
    `;
  }

  renderSheet() {
    return html`
      <div class="colhead">
        <div class="corner">${icons.corner}</div>
        <div class="plain"></div>
        ${["A", "B", "C", "D", "E", "F", "G"].map((c) => html`<div>${c}</div>`)}
        <div></div>
        <div class="colh">H</div>
        <div class="split">${icons.splitter}</div>
        <div></div>
        <div class="plain"></div>
        <div class="scr"><div class="up"><i class="tri-up"></i></div></div>
      </div>
      <div class="main">
        <div class="rowhead">
          <div class="first">1</div>
          ${ROW_LABELS.map((n) => html`<div>${n}</div>`)}
          <div class="faint">41</div>
        </div>
        <div class="sheet">
          <div class="title">Monthly Sales Log — 18 Orders</div>
          <div class="content">
            <div class="table">
              ${HEADERS.map((h, i) => html`<div class="cell head ${i === 6 ? "last" : ""}">${h}</div>`)}
              ${ORDERS.map((r, ri) =>
                r.map((v, i) => {
                  const cls = [
                    i === 0 ? "id" : "",
                    i === 0 || i === 1 || i === 4 ? "num" : "",
                    ri % 2 ? "alt" : "",
                    i === 6 ? v.toLowerCase() : "",
                  ].join(" ");
                  return html`<div class="cell ${cls}">${v}</div>`;
                })
              )}
              <div class="cell total id">TOTAL</div>
              <div class="cell total"></div>
              <div class="cell total"></div>
              <div class="cell total">61</div>
              <div class="cell total">51,400</div>
              <div class="cell total"></div>
              <div class="cell total"></div>
            </div>
            <div class="summary">
              <div class="stitle">Status Summary</div>
              ${SUMMARY.map(
                ([l, v, c]) => html`<div class="lab ${c}">${l}</div><div class="val ${c}">${v}</div>`
              )}
            </div>
          </div>
        </div>
        <div class="vscroll">
          <div class="vthumb"></div>
          <div class="up down"><i class="tri-down"></i></div>
        </div>
      </div>
    `;
  }

  renderBottom() {
    return html`
      <div class="sheetbar">
        <div class="nav"><i class="tri-left"></i><i class="tri-right"></i></div>
        <div class="stab">Sales Log</div>
        <div class="addsheet">${icons.plus}</div>
        <div class="hdots">⋮</div>
        <div class="hscroll">
          <div class="sbtn"><i class="tri-left"></i></div>
          <div class="hthumb"></div>
          <div class="htrack"></div>
          <div class="sbtn"><i class="tri-right"></i></div>
        </div>
      </div>
      <div class="status">
        <span class="ready">Ready</span>
        <div class="views">
          <div class="view on">${icons.viewNormal}</div>
          <div class="view">${icons.viewLayout}</div>
          <div class="view">${icons.viewBreak}</div>
        </div>
        <div class="zoom">
          <span>−</span>
          <div class="slider"><i class="knob"></i></div>
          <span class="zplus">+</span>
          <span class="pct">100%</span>
        </div>
      </div>
    `;
  }
}
